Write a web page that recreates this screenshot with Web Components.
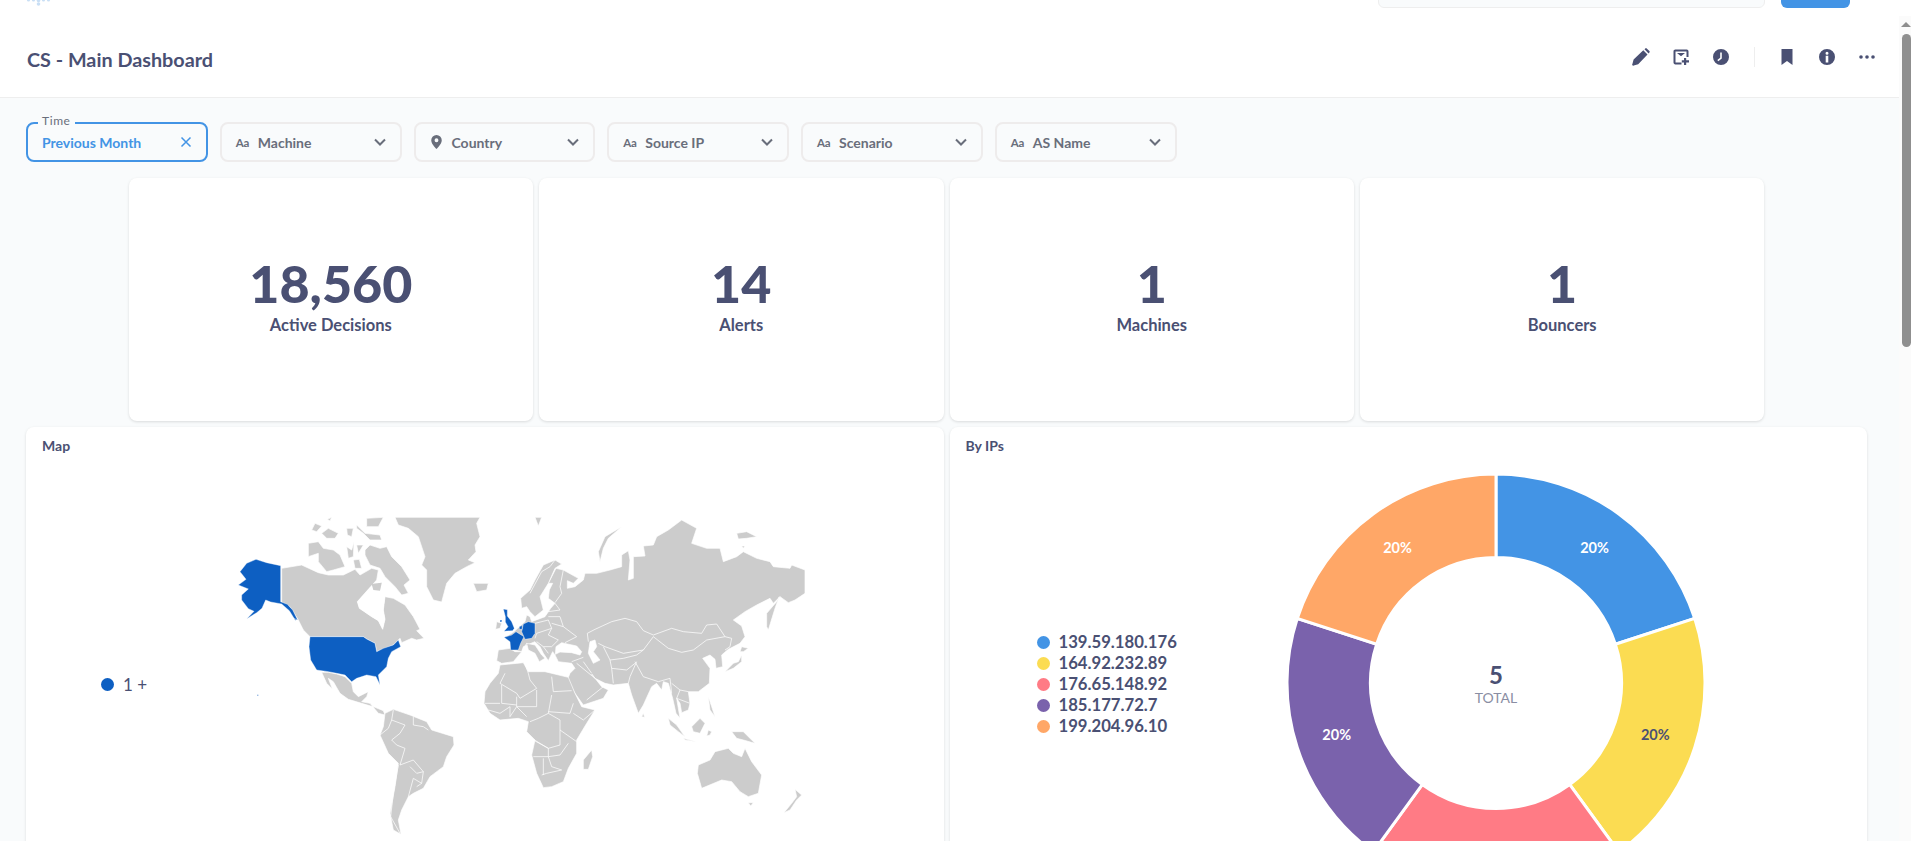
<!DOCTYPE html>
<html lang="en">
<head>
<meta charset="utf-8">
<title>CS - Main Dashboard</title>
<style>
  html, body { margin: 0; height: 841px; overflow: hidden; background: #fff; }
  body { font-family: Lato, "Noto Sans", sans-serif; color: #4a5073; }
</style>
</head>
<body>
<app-shell>
  <nav-strip slot="nav"></nav-strip>
  <dash-header slot="header" title="CS - Main Dashboard"></dash-header>
  <filter-bar slot="filters">
    <filter-select active label="Time" value="Previous Month"></filter-select>
    <filter-select icon="text" value="Machine"></filter-select>
    <filter-select icon="pin" value="Country"></filter-select>
    <filter-select icon="text" value="Source IP"></filter-select>
    <filter-select icon="text" value="Scenario"></filter-select>
    <filter-select icon="text" value="AS Name"></filter-select>
  </filter-bar>
  <dash-grid slot="grid">
    <stat-card first value="18,560" label="Active Decisions"></stat-card>
    <stat-card value="14" label="Alerts"></stat-card>
    <stat-card value="1" label="Machines"></stat-card>
    <stat-card value="1" label="Bouncers"></stat-card>
    <chart-card title="Map"><world-map></world-map></chart-card>
    <chart-card title="By IPs"><donut-chart></donut-chart></chart-card>
  </dash-grid>
</app-shell>

<script>
const ink = '#4a5073';
const grey = '#696e7b';

class AppShell extends HTMLElement {
  constructor() {
    super();
    this.attachShadow({ mode: 'open' });
    this.shadowRoot.innerHTML = `
      <style>
        :host { display: block; height: 841px; overflow: hidden; }
        .row { display: flex; height: 833px; }
        main { flex: 1; min-width: 0; background: #f9fbfc; overflow: hidden; }
        .bar { width: 12px; margin-top: 8px; background: #fbfbfb; display: flex; flex-direction: column; align-items: center; }
        .arrow { margin-top: 6px; margin-left: 2px; width: 0; height: 0; border: 5px solid transparent; border-top: 0; border-bottom: 5px solid #8e8e8e; }
        .thumb { width: 9px; margin-top: 7px; margin-left: 2px; height: 313px; border-radius: 5px; background: #8f8f8f; }
      </style>
      <slot name="nav"></slot>
      <div class="row">
        <main>
          <slot name="header"></slot>
          <slot name="filters"></slot>
          <slot name="grid"></slot>
        </main>
        <div class="bar"><div class="arrow"></div><div class="thumb"></div></div>
      </div>
    `;
  }
}

class NavStrip extends HTMLElement {
  constructor() {
    super();
    this.attachShadow({ mode: 'open' });
    this.shadowRoot.innerHTML = `
      <style>
        :host { display: flex; height: 8px; background: #fff; overflow: hidden; align-items: flex-end; padding-left: 26px; padding-right: 61px; }
        svg { display: block; align-self: flex-start; }
        .search { margin-left: auto; width: 387px; height: 40px; box-sizing: border-box; margin-bottom: 0.5px; background: #f9fbfc; border: 1px solid #eeeeee; border-radius: 6px; }
        .btn { margin-left: 16px; width: 69px; height: 40px; border-radius: 6px; background: #4394e5; }
      </style>
      <svg width="26" height="6" viewBox="0 0 26 6" fill="#c9dff5">
        <circle cx="2.5" cy="0" r="1.6"/><circle cx="7.5" cy="0" r="1.6"/><circle cx="12.5" cy="0.5" r="1.8"/>
        <circle cx="12.5" cy="4" r="1.8"/><circle cx="17.5" cy="0" r="1.6"/><circle cx="22.5" cy="0" r="1.6"/>
      </svg>
      <div class="search"></div>
      <div class="btn"></div>
    `;
  }
}

class DashHeader extends HTMLElement {
  constructor() {
    super();
    this.attachShadow({ mode: 'open' });
    const title = this.getAttribute('title') || '';
    this.shadowRoot.innerHTML = `
      <style>
        :host { display: flex; align-items: center; justify-content: space-between; box-sizing: border-box; height: 90px; padding: 13px 24px 0 27px; background: #fff; border-bottom: 1px solid #eeeeee; }
        h1 { margin: 0; font-size: 19.8px; font-weight: 700; color: ${ink}; line-height: 26px; }
        .icons { display: flex; align-items: center; gap: 24px; margin-top: -4px; }
        svg { display: block; width: 16px; height: 16px; fill: ${ink}; }
        .sep { width: 1px; height: 20px; background: #eeeeee; margin: 0 0 0 1px; }
      </style>
      <h1>${title}</h1>
      <div class="icons">
        <svg viewBox="0 0 16 16" style="overflow:visible"><path d="M-.6 15 .6 10.500 10.300 1.300 14.500 5.500 5.200 15.200 .7 16.500A1 1 0 0 1-.6 15zM11.500.2 12.300-.6a1 1 0 0 1 1.400 0l2.700 2.700a1 1 0 0 1 0 1.400l-.8.9z"/></svg>
        <svg viewBox="0 0 16 16"><path d="M8.500 14.400H2.300a.8.8 0 0 1-.8-.8V2.300a.8.8 0 0 1 .8-.8h11.400a.8.8 0 0 1 .8.8V8" fill="none" stroke="${ink}" stroke-width="2"/><path d="M4 4h8L8 7.300zM11 9h2.200v2.300H16v2.200h-2.800V16H11v-2.500H8.800v-2.200H11z"/></svg>
        <svg viewBox="0 0 16 16"><path fill-rule="evenodd" d="M8 0a8 8 0 1 1 0 16A8 8 0 0 1 8 0zM7.200 3.500v5.200L4.300 10.900l1 1.300 3.500-2.700V3.500z"/></svg>
        <div class="sep"></div>
        <svg viewBox="0 0 16 16"><path d="M2.500 0h11v16L8 12l-5.500 4z"/></svg>
        <svg viewBox="0 0 16 16"><path fill-rule="evenodd" d="M8 0a8 8 0 1 1 0 16A8 8 0 0 1 8 0zM8 2.800a1.500 1.500 0 1 0 0 3 1.500 1.500 0 0 0 0-3zM6.700 6.800v6.600h2.600V6.800z"/></svg>
        <svg viewBox="0 0 16 16"><circle cx="2" cy="8" r="1.800"/><circle cx="8" cy="8" r="1.800"/><circle cx="14" cy="8" r="1.800"/></svg>
      </div>
    `;
  }
}

class FilterBar extends HTMLElement {
  constructor() {
    super();
    this.attachShadow({ mode: 'open' });
    this.shadowRoot.innerHTML = `
      <style>
        :host { display: flex; gap: 12px; padding: 24px 0 16px 26px; }
      </style>
      <slot></slot>
    `;
  }
}

class FilterSelect extends HTMLElement {
  constructor() {
    super();
    this.attachShadow({ mode: 'open' });
    const value = this.getAttribute('value') || '';
    const label = this.getAttribute('label');
    const icon = this.getAttribute('icon');
    const active = this.hasAttribute('active');
    let glyph = '';
    if (icon === 'text') glyph = '<span class="aa">Aa</span>';
    if (icon === 'pin') glyph = '<svg class="pin" viewBox="0 0 12 16"><path fill-rule="evenodd" d="M6 0a6 6 0 0 1 6 6c0 3.500-3.800 8-6 10-2.200-2-6-6.500-6-10a6 6 0 0 1 6-6zm0 3.800a2.200 2.200 0 1 0 0 4.400 2.200 2.200 0 0 0 0-4.400z"/></svg>';
    const end = active
      ? '<svg class="end" viewBox="0 0 12 12"><path d="M1.500 1.500l9 9M10.500 1.500l-9 9" fill="none" stroke="#4394e5" stroke-width="1.500"/></svg>'
      : '<svg class="end" viewBox="0 0 12 12"><path d="M1 3.500l5 5 5-5" fill="none" stroke="#696e7b" stroke-width="2"/></svg>';
    this.shadowRoot.innerHTML = `
      <style>
        :host { display: flex; align-items: center; position: relative; box-sizing: border-box; width: 181.75px; height: 40px; padding: 0 14px; border: 2px solid ${active ? '#4394e5' : '#eeecec'}; border-radius: 8px; font-size: 14px; font-weight: 700; color: ${active ? '#4394e5' : grey}; }
        .aa { width: 22px; font-size: 11.500px; font-weight: 700; color: ${grey}; letter-spacing: -0.200px; flex: none; }
        .pin { width: 11px; height: 14px; fill: ${grey}; margin: 0 10px 0 1px; flex: none; }
        .text { flex: 1; white-space: nowrap; }
        .end { width: 12px; height: 12px; flex: none; }
        .label { position: absolute; left: 10px; top: -10px; padding: 0 4px; background: #f9fbfc; font-size: 12px; line-height: 14px; font-weight: 400; letter-spacing: 0.600px; color: ${grey}; }
      </style>
      ${label ? `<span class="label">${label}</span>` : ''}
      ${glyph}
      <span class="text">${value}</span>
      ${end}
    `;
  }
}

class DashGrid extends HTMLElement {
  constructor() {
    super();
    this.attachShadow({ mode: 'open' });
    this.shadowRoot.innerHTML = `
      <style>
        :host { display: grid; grid-template-columns: repeat(18, 1fr); grid-template-rows: 243px 490px; gap: 6px; padding: 0 32px 0 26px; }
      </style>
      <slot></slot>
    `;
  }
}

class StatCard extends HTMLElement {
  constructor() {
    super();
    this.attachShadow({ mode: 'open' });
    const value = this.getAttribute('value') || '';
    const label = this.getAttribute('label') || '';
    this.shadowRoot.innerHTML = `
      <style>
        :host { grid-column: span 4; display: flex; flex-direction: column; align-items: center; justify-content: center; background: #fff; border-radius: 8px; box-shadow: 0 1px 3px rgba(0, 0, 0, 0.13); padding-bottom: 9px; box-sizing: border-box; color: ${ink}; }
        :host([first]) { grid-column: 2 / span 4; }
        .value { font-size: 52px; font-weight: 900; line-height: 54px; }
        .label { font-size: 16.5px; font-weight: 700; line-height: 20px; margin-top: 5px; }
      </style>
      <div class="value">${value}</div>
      <div class="label">${label}</div>
    `;
  }
}

class ChartCard extends HTMLElement {
  constructor() {
    super();
    this.attachShadow({ mode: 'open' });
    const title = this.getAttribute('title') || '';
    this.shadowRoot.innerHTML = `
      <style>
        :host { grid-column: span 9; display: flex; flex-direction: column; background: #fff; border-radius: 8px; box-shadow: 0 1px 3px rgba(0, 0, 0, 0.13); overflow: hidden; color: ${ink}; }
        h2 { margin: 0; height: 34px; box-sizing: border-box; padding: 10px 16px 0; font-size: 14px; line-height: 18px; font-weight: 700; }
        .body { height: 446px; }
      </style>
      <h2>${title}</h2>
      <div class="body"><slot></slot></div>
    `;
  }
}

// traced outlines, x/y are 3x page pixels with the left half measured from x=0 and y=420
const LAND_WEST = [
  '935,330 945,310 965,318 950,335', '982,298 995,292 990,303',
  '965,340 985,325 1015,340 1005,355 980,355',
  '925,370 955,365 970,385 1000,390 1020,405 1035,440 1000,450 980,455 955,425 955,400 925,410',
  '1040,325 1060,325 1055,350 1042,345', '1070,315 1095,340 1140,345 1145,360 1110,360 1090,340 1070,325',
  '1100,295 1150,292 1135,320 1100,320', '1040,380 1055,390 1062,365 1060,410 1045,415',
  '1070,375 1090,375 1075,400',
  '1095,390 1110,375 1140,385 1160,380 1175,410 1205,440 1230,480 1212,495 1225,520 1205,525 1185,500 1155,470 1140,445 1110,435 1095,405',
  '1185,292 1440,292 1430,310 1440,350 1425,375 1428,395 1405,420 1425,428 1400,440 1365,460 1340,490 1325,546 1300,540 1280,500 1280,450 1265,435 1275,410 1255,350 1225,325 1195,315',
  '1420,490 1465,490 1460,510 1430,515',
  '1115,492 1145,488 1140,512 1120,510',
  '1060,420 1078,418 1085,445 1065,445',
  // Canada, Hudson Bay is left as a bite out of the top edge
  '845,445 905,435 955,458 985,465 1030,465 1065,448 1080,465 1115,445 1135,450 1130,480 1112,500 1072,545 1078,565 1115,590 1135,602 1148,628 1155,598 1150,570 1155,530 1180,535 1215,555 1240,590 1260,628 1250,632 1272,655 1250,660 1235,655 1205,668 1200,655 1180,675 1130,695 1125,670 1100,657 1090,650 930,650 910,630 895,600 870,560 845,548',
  // Mexico and Central America
  '965,757 985,757 1010,762 1035,770 1055,790 1060,815 1075,830 1105,815 1100,830 1085,845 1110,850 1135,880 1155,885 1150,872 1125,862 1085,850 1045,838 1020,820 1000,785 985,775 997,807 980,790',
  // South America
  '1155,880 1180,868 1230,885 1280,905 1295,930 1360,950 1362,975 1340,1010 1330,1040 1290,1070 1270,1105 1240,1120 1225,1130 1205,1170 1195,1200 1203,1243 1180,1230 1170,1180 1185,1100 1195,1030 1165,1000 1140,945 1150,920'
];
const BLUE_WEST = [
  '768,418 800,428 842,437 842,545 862,553 878,570 893,600 884,598 868,572 845,552 812,546 797,540 786,565 770,578 740,597 762,574 745,566 725,540 725,525 745,507 715,495 738,478 720,455 740,430',
  '930,650 1090,650 1100,657 1125,670 1130,695 1150,685 1180,675 1195,660 1202,680 1175,695 1165,715 1160,740 1135,765 1140,795 1128,770 1100,765 1070,775 1055,785 1035,765 1010,760 985,755 950,750 932,720 927,680',
  '771,824 775,824 775,827 771,827', '883,595 888,598 886,602'
];
const LINES_WEST = [
  '1180,870 1175,900 1215,915 1200,940 1175,960 1190,975 1215,985 1200,1035 1240,1020 1270,1055 1250,1060 1230,1040',
  '1140,945 1165,925 1175,900', '1195,1035 1180,1120 1172,1190 1200,1240', '1240,890 1240,915 1270,920 1285,930',
  '1265,1090 1240,1075 1225,1130', '1270,1055 1265,1090 1250,1100'
];
const LAND_EAST = [
  '205,490 228,445 250,450 295,475 280,490 262,482 262,505 285,500 310,480 315,460 350,460 390,450 425,440 425,405 445,392 450,420 445,480 460,475 460,410 495,408 490,378 520,375 530,350 565,330 605,300 650,325 635,370 680,385 720,385 730,425 770,410 790,395 830,415 870,425 880,440 930,445 935,435 975,450 975,520 945,540 925,548 900,530 880,550 870,535 830,555 795,575 760,600 785,618 795,650 780,670 745,688 725,705 728,740 708,745 705,718 690,705 668,715 690,745 688,790 655,815 625,815 630,850 625,870 605,878 600,850 590,835 600,895 588,880 578,835 565,790 550,785 545,810 530,790 515,800 490,855 475,880 455,825 445,790 400,795 375,790 345,775 335,762 365,800 385,810 370,835 310,855 285,820 262,780 270,760 285,745 275,730 235,725 225,705 218,695 205,722 190,700 180,680 165,665 148,672 130,680 125,695 100,690 90,665 75,652 100,637 118,620 135,605 140,585 150,590 155,605 195,590 212,565 225,550 205,535 208,510 218,490',
  '122,535 150,510 165,480 190,435 225,420 245,432 225,445 205,490 180,530 190,570 165,590 150,575 140,560 125,565',
  '55,690 90,685 105,695 125,695 100,725 65,730 50,722', '140,670 165,675 185,705 195,715 178,725 165,700 145,690',
  '50,605 65,610 60,625 47,628',
  '165,292 185,292 175,318', '425,320 375,350 355,395 360,425 370,385 385,355', '770,340 800,335 830,350 800,355 775,357', '785,378 795,378 790,385',
  '60,735 130,728 145,755 195,755 265,772 285,820 305,860 345,870 320,910 290,960 290,1000 265,1045 250,1085 215,1100 190,1103 170,1060 155,1005 165,960 140,935 145,905 115,895 60,900 30,880 12,850 15,815 30,790 55,760',
  '335,990 338,1010 325,1048 310,1048 310,1020',
  '655,1035 690,1020 705,995 745,985 760,1000 785,1010 795,985 815,1025 845,1065 835,1120 805,1130 780,1115 755,1085 725,1080 665,1105 652,1060',
  '805,1148 820,1148 812,1158', '945,1108 965,1125 950,1140 930,1170 912,1178 935,1150 950,1130',
  '565,895 590,915 615,950 595,935 570,915', '610,955 650,965 615,960', '635,920 660,895 675,910 660,940 640,935',
  '685,930 695,935 690,945 680,948', '755,935 790,935 825,970 790,960 770,955', '685,830 695,860 705,890 690,870',
  '490,880 494,892 485,890', '785,680 805,685 790,695 780,695', '785,705 785,725 760,745 735,755 760,730 775,725',
  '860,580 890,545 898,530 885,565 865,630 860,620'
];
const SEAS_EAST = [
  '228,680 245,668 262,672 290,678 305,695 300,705 275,698 240,696 226,703',
  '330,665 345,660 350,680 340,695 360,720 340,730 325,700'
];
const BLUE_EAST = [
  '72,652 95,645 108,635 132,650 122,670 115,690 92,690 90,665',
  '70,567 82,569 82,588 95,605 103,625 98,632 72,634 84,620 76,606 76,590', '60,600 66,600 65,606 60,606',
  '130,612 145,605 165,610 165,640 155,655 135,658 125,635', '118,620 127,616 126,628 118,628'
];
const LINES_EAST = [
  '322,640 345,628 395,605 435,595 470,605 490,632 520,645 575,625 610,635 665,640 680,615 710,612 735,650 755,655 750,680 735,690',
  '520,650 565,685 605,697 640,690 680,660 735,650', '520,650 490,690 470,705 430,715',
  '322,640 325,665', '355,670 375,680 430,700 490,690', '370,680 390,720 430,715', '395,745 400,790',
  '470,725 450,770 445,790', '465,725 490,770 535,785 570,775 575,820', '310,725 335,760', '390,720 395,745 440,750 465,730',
  '310,712 275,725', '290,730 345,775', '320,840 370,800', '600,810 590,835 630,850', '575,790 600,810 625,815',
  '215,610 250,620 290,650 255,668', '205,590 240,590 250,620', '165,610 205,600 215,625 170,640 165,655', '205,575 240,570 225,550',
  '205,645 235,660 215,680 190,680 170,665', '215,625 205,645', '190,680 205,700', '250,450 240,500 245,520 225,548',
  '150,520 185,455 210,440 225,420', '125,695 140,670',
  '135,730 145,760 150,780 170,805', '75,760 60,790 110,820 120,835 170,805', '215,770 220,815 275,812', '215,825 205,880', '110,830 110,860 170,860 170,810',
  '65,795 65,850 110,855', '205,875 270,880 280,850', '280,880 310,900 345,870', '150,905 175,895 205,880 240,900 240,975 205,985 155,955',
  '160,960 205,985 205,1010 160,1010', '240,930 290,965', '205,1010 240,1005 265,970', '185,1065 200,1060 245,1050', '190,1015 190,1065',
  '15,850 60,850', '25,870 60,880 90,860 90,890 110,860 140,890', '205,1010 215,1040 245,1050'
];

class WorldMap extends HTMLElement {
  constructor() {
    super();
    this.attachShadow({ mode: 'open' });
    const polys = (list, fill, width) => list.map(p => `<polygon points="${p}" fill="${fill}" stroke="#fff" stroke-width="${width}" stroke-linejoin="round"/>`).join('');
    const lines = list => list.map(p => `<polyline points="${p}" fill="none" stroke="#fff" stroke-width="2.200"/>`).join('');
    this.shadowRoot.innerHTML = `
      <style>
        :host { display: flex; align-items: center; height: 446px; }
        .legend { width: 160px; padding-left: 75px; box-sizing: border-box; display: flex; align-items: center; gap: 9px; font-size: 17px; font-weight: 400; flex: none; white-space: nowrap; }
        .dot { width: 13px; height: 13px; border-radius: 50%; background: #0d5fc2; flex: none; }
        svg { display: block; width: 758px; height: 446px; flex: none; }
      </style>
      <div class="legend"><span class="dot"></span><span>1 +</span></div>
      <svg viewBox="558 123 2274 1338">
        ${polys(LAND_WEST, '#cccccc', 2)}
        <polygon points="1072,545 1112,500 1132,490 1155,530 1150,570 1155,598 1148,628 1135,602 1115,590 1078,565" fill="#fff"/>
        <polygon points="1115,492 1145,488 1140,512 1120,510" fill="#ccc"/>
        ${lines(LINES_WEST)}
        ${polys(BLUE_WEST, '#0d5fc2', 1.2)}
        <g transform="translate(1440 0)">
          ${polys(LAND_EAST, '#cccccc', 2)}
          ${polys(SEAS_EAST, '#ffffff', 2)}
          ${lines(LINES_EAST)}
          ${polys(BLUE_EAST, '#0d5fc2', 1.2)}
        </g>
      </svg>
    `;
  }
}

const SLICES = [
  { name: '139.59.180.176', color: '#4394e5', text: '#fff' },
  { name: '164.92.232.89', color: '#fbdc52', text: ink },
  { name: '176.65.148.92', color: '#ff7b85', text: null },
  { name: '185.177.72.7', color: '#7a62ac', text: '#fff' },
  { name: '199.204.96.10', color: '#ffa767', text: '#fff' }
];

class DonutChart extends HTMLElement {
  constructor() {
    super();
    this.attachShadow({ mode: 'open' });
    const cx = 296, cy = 222, outer = 209, inner = 125.500;
    const pt = (r, a) => (cx + r * Math.sin(a)).toFixed(2) + ' ' + (cy - r * Math.cos(a)).toFixed(2);
    let paths = '';
    let labels = '';
    SLICES.forEach((s, i) => {
      const a0 = i * 2 * Math.PI / 5, a1 = (i + 1) * 2 * Math.PI / 5, mid = (a0 + a1) / 2, rm = 167.500;
      paths += `<path d="M${pt(outer, a0)} A${outer} ${outer} 0 0 1 ${pt(outer, a1)} L${pt(inner, a1)} A${inner} ${inner} 0 0 0 ${pt(inner, a0)}Z" fill="${s.color}" stroke="#fff" stroke-width="3"/>`;
      // the bottom slice's label sits below the fold
      if (!s.text) return;
      const lx = cx + rm * Math.sin(mid), ly = cy - rm * Math.cos(mid);
      labels += `<text x="${lx.toFixed(1)}" y="${(ly + 5).toFixed(1)}" fill="${s.text}" font-size="14.500" font-weight="700" text-anchor="middle">20%</text>`;
    });
    const legend = SLICES.map(s => `<li><span class="dot" style="background:${s.color}"></span>${s.name}</li>`).join('');
    this.shadowRoot.innerHTML = `
      <style>
        :host { display: flex; align-items: center; height: 446px; }
        ul { list-style: none; margin: 0; padding: 0 0 0 87px; width: 250.500px; box-sizing: border-box; flex: none; }
        li { display: flex; align-items: center; gap: 9px; height: 21px; font-size: 16.7px; font-weight: 700; white-space: nowrap; }
        .dot { width: 13px; height: 13px; border-radius: 50%; flex: none; }
        svg { display: block; width: 667px; height: 446px; flex: none; font-family: Lato, "Noto Sans", sans-serif; }
      </style>
      <ul>${legend}</ul>
      <svg viewBox="0 0 667 446">
        ${paths}
        ${labels}
        <text x="${cx}" y="${cy + 1}" fill="${ink}" font-size="24" font-weight="700" text-anchor="middle">5</text>
        <text x="${cx}" y="${cy + 20}" fill="#8a8ea3" font-size="14" font-weight="400" text-anchor="middle">TOTAL</text>
      </svg>
    `;
  }
}

customElements.define('app-shell', AppShell);
customElements.define('nav-strip', NavStrip);
customElements.define('dash-header', DashHeader);
customElements.define('filter-bar', FilterBar);
customElements.define('filter-select', FilterSelect);
customElements.define('dash-grid', DashGrid);
customElements.define('stat-card', StatCard);
customElements.define('chart-card', ChartCard);
customElements.define('world-map', WorldMap);
customElements.define('donut-chart', DonutChart);
</script>
</body>
</html>
